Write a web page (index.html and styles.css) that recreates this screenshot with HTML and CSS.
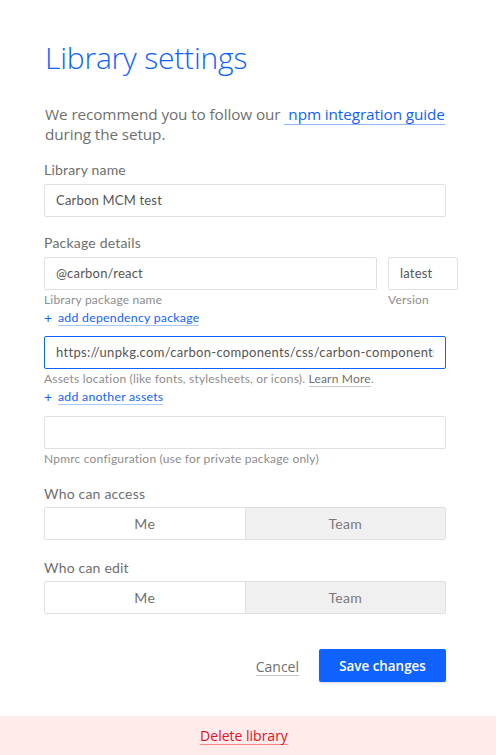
FILE: index.html
```html
<!DOCTYPE html>
<html>
<head>
<meta charset="utf-8">
<link rel="stylesheet" href="styles.css">
</head>
<body>
<div class="page">
  <main class="content">
    <h1 class="title">Library settings</h1>
    <p class="intro">We recommend you to follow our <a class="intro-link" href="#">npm integration guide</a> during the setup.</p>

    <section class="field">
      <div class="label">Library name</div>
      <div class="input">Carbon MCM test</div>
    </section>

    <section class="field">
      <div class="label">Package details</div>
      <div class="pkg-row">
        <div class="pkg-col pkg-main">
          <div class="input">@carbon/react</div>
          <div class="helper">Library package name</div>
        </div>
        <div class="pkg-col pkg-ver">
          <div class="input">latest</div>
          <div class="helper">Version</div>
        </div>
      </div>
      <div class="add"><span class="plus">+</span><a class="add-link" href="#">add dependency package</a></div>
    </section>

    <section class="field field-assets">
      <div class="input input-focus"><span class="clip">https://unpkg.com/carbon-components/css/carbon-components.min.css</span></div>
      <div class="helper">Assets location (like fonts, stylesheets, or icons). <a class="learn" href="#">Learn More</a>.</div>
      <div class="add"><span class="plus">+</span><a class="add-link" href="#">add another assets</a></div>
    </section>

    <section class="field field-npmrc">
      <div class="input"></div>
      <div class="helper">Npmrc configuration (use for private package only)</div>
    </section>

    <section class="field field-toggle">
      <div class="label label-tight">Who can access</div>
      <div class="toggle">
        <div class="opt opt-on">Me</div>
        <div class="opt opt-off">Team</div>
      </div>
    </section>

    <section class="field field-toggle2">
      <div class="label label-tight">Who can edit</div>
      <div class="toggle">
        <div class="opt opt-on">Me</div>
        <div class="opt opt-off">Team</div>
      </div>
    </section>

    <div class="actions">
      <a class="cancel" href="#">Cancel</a>
      <button class="save">Save changes</button>
    </div>
  </main>
  <footer class="danger">
    <a class="delete" href="#">Delete library</a>
  </footer>
</div>
</body>
</html>
```
FILE: styles.css
```css
* { box-sizing: border-box; }
html, body { margin: 0; padding: 0; background: #fff; }
body { width: 496px; height: 755px; overflow: hidden; }
.page { display: flex; flex-direction: column; height: 755px; }
.content { flex: 1; padding: 38px 50px 0 44px; font-family: "Lato", "Open Sans", sans-serif; color: #6f6f6f; }
.title {
  margin: 0 0 0 1px;
  font-family: "Open Sans", sans-serif;
  font-weight: 300;
  font-size: 30px;
  line-height: 40px;
  color: #0f62fe;
  letter-spacing: -0.2px;
}
.intro {
  margin: 26px -8px 0 1px;
  font-family: "Open Sans", sans-serif;
  font-size: 15.3px;
  line-height: 20px;
  color: #6f6f6f;
  letter-spacing: -0.1px;
}
.intro-link {
  color: #0f62fe;
  text-decoration: none;
  border-bottom: 1px solid #8fb4ff;
  padding-left: 4px;
  white-space: nowrap;
}
.field { margin-top: 17px; }
.label { font-size: 14px; line-height: 18px; color: #6f6f6f; margin-bottom: 5px; letter-spacing: 0.2px; }
.label-tight { margin-bottom: 4px; }
.input {
  height: 33px;
  border: 1px solid #e0e0e0;
  border-radius: 2px;
  padding: 0 11px;
  font-size: 13px;
  line-height: 31px;
  color: #555;
  background: #fff;
  letter-spacing: 0.2px;
  white-space: nowrap;
  overflow: hidden;
}
.input-focus { border-color: #0f62fe; letter-spacing: 0.3px; }
.clip { display: block; overflow: hidden; width: 100%; }
.pkg-row { display: flex; gap: 11px; width: 414px; }
.pkg-main { width: 333px; }
.pkg-ver { width: 70px; }
.helper { font-size: 12px; line-height: 14px; color: #8d8d8d; margin-top: 3px; letter-spacing: 0.2px; }
.learn { color: #6f6f6f; text-decoration: none; border-bottom: 1px solid #c6c6c6; }
.add { font-size: 12.3px; line-height: 16px; margin-top: 3px; display: flex; align-items: center; }
.plus { color: #0f62fe; font-size: 14px; width: 14px; }
.add-link { color: #0f62fe; text-decoration: none; border-bottom: 1px solid #a6c8ff; line-height: 14px; letter-spacing: 0.25px; }
.field-assets { margin-top: 10px; }
.field-npmrc { margin-top: 11px; }
.field-toggle { margin-top: 19px; }
.field-toggle2 { margin-top: 19px; }
.toggle { display: flex; height: 33px; border: 1px solid #e0e0e0; border-radius: 2px; overflow: hidden; }
.opt { flex: 1; display: flex; align-items: center; justify-content: center; font-size: 14px; color: #6f6f6f; letter-spacing: 0.3px; }
.opt-on { background: #fff; border-right: 1px solid #e0e0e0; }
.opt-off { background: #f0f0f0; color: #7a7a7a; }
.actions { display: flex; justify-content: flex-end; align-items: center; margin-top: 35px; gap: 20px; }
.cancel {
  font-family: "Open Sans", sans-serif;
  font-size: 14px;
  color: #6f6f6f;
  text-decoration: none;
  border-bottom: 1px solid #c6c6c6;
  line-height: 17px;
  margin-top: 2px;
}
.save {
  width: 127px;
  height: 33px;
  background: #0f62fe;
  border: none;
  border-radius: 2px;
  color: #fff;
  font-family: "Open Sans", sans-serif;
  font-size: 13.4px;
  font-weight: 600;
  padding: 0;
  box-shadow: 0 1px 2px rgba(0,0,0,0.15);
}
.danger {
  height: 39px;
  background: #ffebea;
  display: flex;
  align-items: center;
  justify-content: center;
}
.delete {
  font-family: "Open Sans", sans-serif;
  font-size: 14px;
  color: #e8101f;
  text-decoration: none;
  border-bottom: 1px solid #ff8389;
  line-height: 17px;
  margin-left: -8px;
}
```
